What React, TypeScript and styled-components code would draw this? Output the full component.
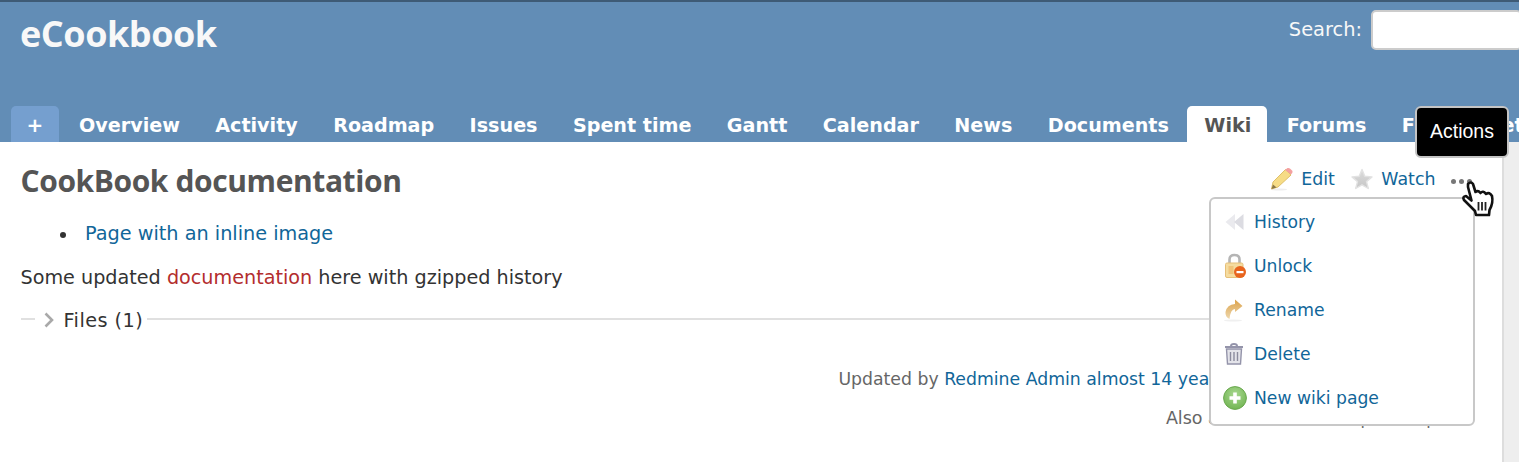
import React from "react";
import styled, { createGlobalStyle } from "styled-components";

const Global = createGlobalStyle`
  html, body { margin: 0; padding: 0; width: 1519px; height: 462px; overflow: hidden; background: #fff; }
  body { font-family: "DejaVu Sans", Verdana, sans-serif; font-size: 18px; color: #333; }
  * { box-sizing: border-box; }
  a { text-decoration: none; color: #169; }
`;

const Page = styled.div`
  position: relative;
  width: 1519px;
  height: 462px;
  overflow: hidden;
  display: flex;
  flex-direction: column;
`;
const TopStripe = styled.div`
  height: 2px;
  flex: none;
  background: #3e5b76;
`;
const Header = styled.header`
  flex: none;
  height: 140px;
  background: #628db6;
  display: flex;
  flex-direction: column;
  justify-content: space-between;
`;
const HeaderTop = styled.div`
  display: flex;
  justify-content: space-between;
  padding: 8px 0 0 20px;
`;
const Title = styled.h1`
  margin: 0;
  font-family: "Open Sans", "Noto Sans", sans-serif;
  font-size: 36px;
  line-height: 48px;
  font-weight: 700;
  color: #f8f8f8;
  letter-spacing: -0.45px;
`;
const SearchBox = styled.div`
  display: flex;
  align-items: center;
  gap: 9px;
  height: 40px;
  margin-right: -3px;
`;
const SearchLabel = styled.label`
  color: #f8f8f8;
  font-size: 19.4px;
  margin-top: -2px;
`;
const SearchInput = styled.input`
  width: 151px;
  height: 40px;
  border: 2px solid #ccc;
  border-radius: 5px;
  background: #fff;
  padding: 0;
  margin: 0;
`;
const Tabs = styled.nav`
  display: flex;
  align-items: stretch;
  height: 36px;
  padding-left: 11px;
  white-space: nowrap;
  overflow: hidden;
`;
const Tab = styled.a<{ $selected?: boolean; $add?: boolean }>`
  flex: none;
  display: flex;
  align-items: center;
  justify-content: center;
  padding: 2px ${(p) => (p.$add ? "0" : p.$selected ? "15.7px" : "17.7px")} 0 ${(p) => (p.$add ? "0" : "17.7px")};
  width: ${(p) => (p.$add ? "48px" : "auto")};
  margin-right: ${(p) => (p.$add ? "2.3px" : p.$selected ? "2px" : "0")};
  font-size: ${(p) => (p.$add ? "20px" : "19.15px")};
  font-weight: 700;
  border-radius: 5px 5px 0 0;
  background: ${(p) => (p.$selected ? "#fff" : p.$add ? "#759fcf" : "transparent")};
  color: ${(p) => (p.$selected ? "#555" : "#fff")};
`;
const Main = styled.div`
  flex: 1;
  min-height: 0;
  display: flex;
`;
const Content = styled.main`
  position: relative;
  flex: 1;
  min-width: 0;
  padding: 20px 20px 0 20.5px;
`;
const Sidebar = styled.aside`
  flex: none;
  width: 17px;
  background: #eee;
  border-left: 2px solid #ddd;
`;
const TitleRow = styled.div`
  display: flex;
  justify-content: space-between;
  align-items: flex-start;
  height: 40px;
`;
const PageTitle = styled.h2`
  margin: 0;
  font-family: "Open Sans", "Noto Sans", sans-serif;
  font-size: 30px;
  line-height: 38px;
  font-weight: 700;
  color: #555;
  letter-spacing: -0.4px;
`;
const Actions = styled.div`
  display: flex;
  align-items: center;
  gap: 15.5px;
  height: 32px;
  padding-right: 10px;
  margin-top: 1px;
`;
const ActionLink = styled.a`
  display: flex;
  align-items: center;
  gap: 7px;
  font-size: 17.4px;
`;
const Dots = styled.span`
  display: flex;
  gap: 3px;
  margin-left: 0;
  margin-top: 5px;
`;
const Dot = styled.i`
  display: block;
  width: 5px;
  height: 5px;
  border-radius: 50%;
  background: #777;
`;
const WikiList = styled.ul`
  margin: 19px 0 0;
  padding: 0 0 0 64.5px;
  font-size: 19.25px;
  line-height: 26px;
  list-style: none;
`;
const WikiItem = styled.li`
  position: relative;
  &::before {
    content: "";
    position: absolute;
    left: -25px;
    top: 11px;
    width: 6px;
    height: 6px;
    border-radius: 50%;
    background: #333;
  }
`;
const Paragraph = styled.p`
  margin: 18px 0 0;
  font-size: 19.2px;
  line-height: 26px;
  color: #333;
`;
const MissingLink = styled.a`
  color: #b32d2d;
`;
const FilesRow = styled.div`
  display: flex;
  align-items: center;
  margin-top: 16px;
  height: 26px;
  margin-right: 30px;
`;
const RuleShort = styled.div`
  width: 14px;
  height: 2px;
  background: #e0e0e0;
  margin-top: -2px;
`;
const FilesLabel = styled.span`
  font-size: 19.25px;
  letter-spacing: 0.45px;
  margin: 0 4px 0 9px;
  display: flex;
  align-items: center;
  gap: 10px;
  color: #333;
`;
const RuleLong = styled.div`
  flex: 1;
  height: 2px;
  background: #e0e0e0;
  margin-top: -2px;
`;
const Updated = styled.p`
  margin: 33px 0 0;
  text-align: right;
  font-size: 17.3px;
  line-height: 26px;
  color: #666;
  padding-right: 219px;
  white-space: nowrap;
`;
const AlsoLine = styled.p`
  margin: 13px 0 0;
  text-align: right;
  font-size: 17.5px;
  line-height: 26px;
  color: #666;
  padding-right: 12px;
  white-space: nowrap;
`;
const Menu = styled.div`
  position: absolute;
  left: 1209px;
  top: 55px;
  width: 266px;
  height: 229px;
  background: #fff;
  border: 2px solid #c8c8c8;
  border-radius: 6px;
  padding: 1px 0 0 12px;
  display: flex;
  flex-direction: column;
`;
const MenuItem = styled.a`
  height: 44px;
  display: flex;
  align-items: center;
  gap: 7px;
  font-size: 17.2px;
  flex: none;
`;
const IconBox = styled.span`
  width: 24px;
  height: 24px;
  flex: none;
  display: flex;
  align-items: center;
  justify-content: center;
`;
const Tooltip = styled.div`
  position: absolute;
  left: 1415px;
  top: 106px;
  width: 94px;
  height: 52px;
  padding-bottom: 2px;
  background: #000;
  color: #fff;
  border: 2px solid #c4c4c4;
  border-radius: 6px;
  display: flex;
  align-items: center;
  justify-content: center;
  font-family: "Liberation Sans", Arial, sans-serif;
  font-size: 19.5px;
`;
const Cursor = styled.svg`
  position: absolute;
  left: 1461px;
  top: 181px;
`;

const Pencil = () => (
  <svg width="24" height="24" viewBox="0 0 24 24">
    <ellipse cx="9" cy="22.5" rx="8" ry="1" fill="#eee" />
    <path d="M3 15 L15.5 2.5 L21 8 L8 20 L1.5 22 Z" fill="#f6dc86" stroke="#dfc06a" strokeWidth="1" />
    <path d="M15 3 L17.5 1 Q19 .5 20.5 2 L22.5 4 Q23 5.5 21 7.5 Z" fill="#f4a0a0" />
    <path d="M1.5 22 L3 17.5 L6.5 20.5 Z" fill="#8a7748" />
  </svg>
);
const Star = () => (
  <svg width="24" height="24" viewBox="0 0 24 24">
    <defs>
      <linearGradient id="starFill" x1="0" y1="0" x2="0" y2="1">
        <stop offset="0" stopColor="#dcdcdc" />
        <stop offset="1" stopColor="#c6c6c6" />
      </linearGradient>
    </defs>
    <path d="M12 2.5 L14.8 9.3 L22 9.9 L16.5 14.6 L18.3 21.5 L12 17.8 L5.7 21.5 L7.5 14.6 L2 9.9 L9.2 9.3 Z" fill="url(#starFill)" stroke="#e2e2e2" strokeWidth="1.4" strokeLinejoin="round" />
  </svg>
);
const Rewind = () => (
  <svg width="24" height="24" viewBox="0 0 24 24">
    <path d="M12 4 L2.5 12 L12 20 Z" fill="#eaeaee" />
    <path d="M20.5 4 L11 12 L20.5 20 Z" fill="#dcdce2" />
  </svg>
);
const LockIcon = () => (
  <svg width="24" height="26" viewBox="0 0 24 26">
    <path d="M6.5 11 V6.5 Q6.5 2 11.5 2 Q16.5 2 16.5 6.5 V11" fill="none" stroke="#b5b5b5" strokeWidth="2.6" />
    <rect x="2.5" y="10" width="17.5" height="14.5" rx="1.5" fill="#f5dca0" stroke="#e6bf78" />
    <rect x="5.5" y="13" width="5" height="8" fill="#f0c47a" />
    <circle cx="17" cy="19" r="6" fill="#e8641e" />
    <rect x="13.5" y="18" width="7" height="2.2" fill="#fff" />
  </svg>
);
const RenameIcon = () => (
  <svg width="24" height="24" viewBox="0 0 24 24">
    <defs>
      <linearGradient id="renameFill" x1="0" y1="0" x2="0" y2="1">
        <stop offset="0" stopColor="#dca24a" />
        <stop offset="1" stopColor="#eed8ae" />
      </linearGradient>
    </defs>
    <ellipse cx="10" cy="22.5" rx="9" ry="1" fill="#f0f0f0" />
    <path d="M12 1.5 L19.5 8 L12 14 V11 Q7.5 11 6.5 21 Q2 19 2.5 14 Q4 6.5 12 6 Z" fill="url(#renameFill)" />
  </svg>
);
const TrashIcon = () => (
  <svg width="24" height="24" viewBox="0 0 24 24">
    <path d="M2 5 H20 M8 4 Q8 2 11 2 Q14 2 14 4" fill="none" stroke="#9494aa" strokeWidth="2" />
    <path d="M3.5 7 H18.5 L17.5 22 H4.5 Z" fill="#e4e4ea" stroke="#9494aa" strokeWidth="1.4" />
    <path d="M7.5 10 V19 M11 10 V19 M14.5 10 V19" stroke="#8c8c9e" strokeWidth="1.4" />
  </svg>
);
const AddIcon = () => (
  <svg width="24" height="24" viewBox="0 0 24 24">
    <defs>
      <radialGradient id="addFill" cx="0.5" cy="0.35" r="0.7">
        <stop offset="0" stopColor="#a8d890" />
        <stop offset="1" stopColor="#6fb350" />
      </radialGradient>
    </defs>
    <circle cx="12" cy="12" r="11.4" fill="url(#addFill)" stroke="#6aa84f" />
    <path d="M12 6.5 V17.5 M6.5 12 H17.5" stroke="#fff" strokeWidth="3.6" />
  </svg>
);
const Chevron = () => (
  <svg width="10" height="16" viewBox="0 0 10 16">
    <path d="M1.5 1.5 L8 8 L1.5 14.5" fill="none" stroke="#a9a9a9" strokeWidth="2.6" />
  </svg>
);

const tabs = ["Overview", "Activity", "Roadmap", "Issues", "Spent time", "Gantt", "Calendar", "News", "Documents", "Wiki", "Forums", "Files", "Settings"];

export default function App() {
  return (
    <Page>
      <Global />
      <TopStripe />
      <Header>
        <HeaderTop>
          <Title>eCookbook</Title>
          <SearchBox>
            <SearchLabel>Search:</SearchLabel>
            <SearchInput />
          </SearchBox>
        </HeaderTop>
        <Tabs>
          <Tab $add>+</Tab>
          {tabs.map((t) => (
            <Tab key={t} $selected={t === "Wiki"}>{t}</Tab>
          ))}
        </Tabs>
      </Header>
      <Main>
        <Content>
          <TitleRow>
            <PageTitle>CookBook documentation</PageTitle>
            <Actions>
              <ActionLink><Pencil />Edit</ActionLink>
              <ActionLink><Star />Watch</ActionLink>
              <Dots><Dot /><Dot /><Dot /></Dots>
            </Actions>
          </TitleRow>
          <WikiList>
            <WikiItem><a>Page with an inline image</a></WikiItem>
          </WikiList>
          <Paragraph>
            Some updated <MissingLink>documentation</MissingLink> here with gzipped history
          </Paragraph>
          <FilesRow>
            <RuleShort />
            <FilesLabel><Chevron />Files (1)</FilesLabel>
            <RuleLong />
          </FilesRow>
          <Updated>Updated by <a>Redmine Admin</a> <a>almost 14 years ago</a></Updated>
          <AlsoLine>Also available in: <a>PDF</a> | <a>HTML</a> | <a>TXT</a></AlsoLine>
          <Menu>
            <MenuItem><IconBox><Rewind /></IconBox>History</MenuItem>
            <MenuItem><IconBox><LockIcon /></IconBox>Unlock</MenuItem>
            <MenuItem><IconBox><RenameIcon /></IconBox>Rename</MenuItem>
            <MenuItem><IconBox><TrashIcon /></IconBox>Delete</MenuItem>
            <MenuItem><IconBox><AddIcon /></IconBox>New wiki page</MenuItem>
          </Menu>
        </Content>
        <Sidebar />
      </Main>
      <Tooltip>Actions</Tooltip>
      <Cursor width="34" height="36" viewBox="0 0 34 36">
        <path d="M7 3 Q10 0 12 3 L14.5 11 Q17 9 19.5 12 Q22 9 25 13 Q28.5 10.5 31 15 Q32.5 22 28.5 29 L28 34 L15 34 L14 30 L3 19 Q1 15.5 5 15 L10.5 19.5 L7 6 Z" fill="#fff" stroke="#111" strokeWidth="2.6" strokeLinejoin="round" />
        <path d="M17.5 21 V29.5 M21 21 V29.5 M24.5 21 V29.5" stroke="#222" strokeWidth="1.8" />
      </Cursor>
    </Page>
  );
}
